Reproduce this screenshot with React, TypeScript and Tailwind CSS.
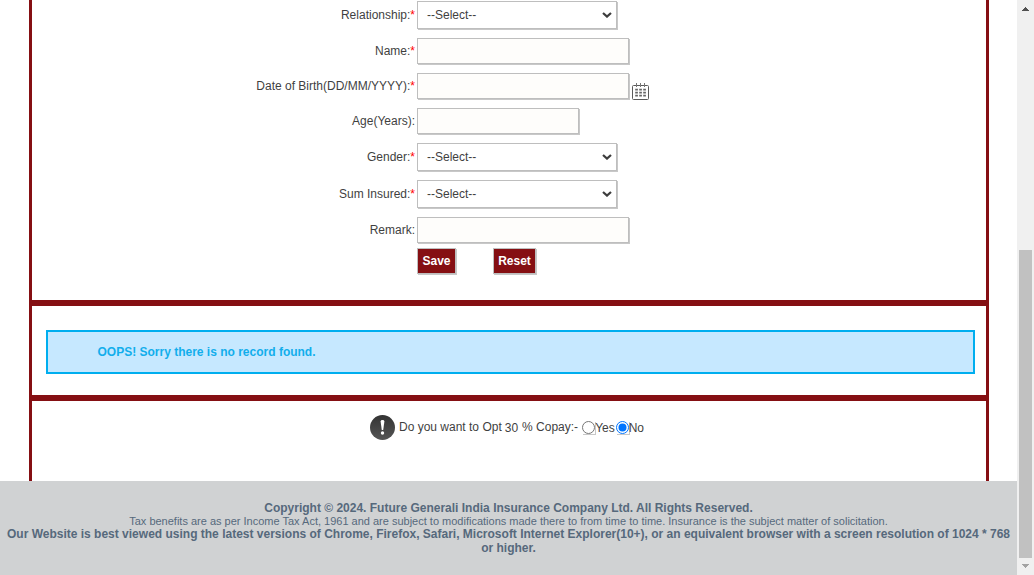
import type { ReactNode } from "react";

const fieldBase = "box-border border border-[#bebebe] shadow-[1px_1px_0_#c8c8c8]";

function Row({ label, required, children }: { label: string; required?: boolean; children: ReactNode }) {
  return (
    <div className="flex items-center">
      <div className="w-[383px] text-right leading-[14px] whitespace-nowrap">
        {label}
        {required && <span className="text-[#ff0000]">*</span>}
      </div>
      <div className="ml-[2px] flex">{children}</div>
    </div>
  );
}

function SelectBox() {
  return (
    <div className={`${fieldBase} flex h-[28px] w-[200px] items-center justify-between bg-white pr-[4px] pl-[9px]`}>
      <span className="leading-[14px]">--Select--</span>
      <svg width="10" height="6" viewBox="0 0 10 6" fill="none">
        <path d="M1 1 L5 4.6 L9 1" stroke="#3c3c3c" strokeWidth="2.2" />
      </svg>
    </div>
  );
}

function TextBox({ short }: { short?: boolean }) {
  return <div className={`${fieldBase} h-[26px] bg-[#fefdfb] ${short ? "w-[162px]" : "w-[212px]"}`} />;
}

function CalendarIcon() {
  return (
    <svg className="mt-[10px] ml-[3px]" width="17" height="17" viewBox="0 0 17 17" fill="none">
      <rect x="0.5" y="2.5" width="16" height="14" rx="1" stroke="#5a5a5a" />
      <path d="M4.5 0V4M8.5 0V4M12.5 0V4" stroke="#777" />
      <path d="M3.2 6.7H14M3.2 9.7H14M3.2 12.7H14" stroke="#666" strokeWidth="1.7" strokeDasharray="2.7 1.3" />
    </svg>
  );
}

function Radio({ on }: { on?: boolean }) {
  return (
    <span className="flex size-[13px] shadow-[1px_1px_0_#c8c8c8]">
      <svg width="13" height="13" viewBox="0 0 13 13">
        <circle cx="6.5" cy="6.5" r="6" fill="#fff" stroke={on ? "#0075ff" : "#767676"} />
        {on && <circle cx="6.5" cy="6.5" r="4" fill="#0075ff" />}
      </svg>
    </span>
  );
}

function AlertIcon() {
  return (
    <svg width="25" height="25" viewBox="0 0 25 25">
      <defs>
        <linearGradient id="disc" x1="0" y1="0" x2="0" y2="1">
          <stop offset="0" stopColor="#333" />
          <stop offset="1" stopColor="#555" />
        </linearGradient>
      </defs>
      <circle cx="12.5" cy="12.5" r="12.5" fill="url(#disc)" />
      <path d="M10.6 6.4Q10.6 5 12.5 5Q14.4 5 14.4 6.4L13.2 15H11.8Z" fill="#fff" />
      <circle cx="12.5" cy="18" r="1.7" fill="#fff" />
    </svg>
  );
}

export default function App() {
  return (
    <div className="flex h-[575px] w-[1034px] overflow-hidden bg-white font-['Liberation_Sans',Arial,sans-serif] text-[12px] text-[#3f3f3f]">
      <div className="flex w-[1017px] flex-col">
        <main className="ml-[29px] flex h-[481px] w-[960px] flex-col border-x-[3px] border-[#850f13]">
          <section className="flex h-[300px] flex-col gap-[9px] pt-px">
            <Row label="Relationship:" required><SelectBox /></Row>
            <Row label="Name:" required><TextBox /></Row>
            <Row label="Date of Birth(DD/MM/YYYY):" required>
              <div className="flex h-[26px]">
                <TextBox />
                <CalendarIcon />
              </div>
            </Row>
            <Row label="Age(Years):"><TextBox short /></Row>
            <Row label="Gender:" required><SelectBox /></Row>
            <Row label="Sum Insured:" required><SelectBox /></Row>
            <Row label="Remark:"><TextBox /></Row>
            <div className="-mt-1 ml-[385px] flex gap-[37px] font-bold text-white">
              <button className={`${fieldBase} flex h-[26px] w-[39px] justify-center bg-[#850f13] pt-[5px] leading-[14px]`}>Save</button>
              <button className={`${fieldBase} flex h-[26px] w-[43px] justify-center bg-[#850f13] pt-[5px] leading-[14px]`}>Reset</button>
            </div>
          </section>
          <section className="h-[101px] border-y-[6px] border-[#850f13] pt-6 pr-[11px] pl-[14px]">
            <div className="flex h-[44px] items-center border-2 border-[#00aeef] bg-[#c6e8ff] pl-[49.5px] font-bold text-[#12aeec]">
              OOPS! Sorry there is no record found.
            </div>
          </section>
          <section className="flex h-[80px] items-start pt-[14px] pl-[338px]">
            <AlertIcon />
            <span className="ml-1 pt-[5px] leading-[14px] whitespace-nowrap">Do you want to Opt</span>
            <span className="ml-[3px] pt-[6px] leading-[14px]">30</span>
            <span className="ml-[4px] pt-[5px] leading-[14px] whitespace-nowrap">% Copay:-</span>
            <span className="ml-[4px] flex pt-[6px] leading-[14px]">
              <Radio />Yes
              <span className="ml-[1px] flex"><Radio on />No</span>
            </span>
          </section>
        </main>
        <footer className="h-[94px] bg-[#d0d2d3] pt-5 text-center font-bold text-[#56697c]">
          <p className="leading-[14px]">Copyright © 2024. Future Generali India Insurance Company Ltd. All Rights Reserved.</p>
          <p className="text-[11px] leading-[12px] font-normal">Tax benefits are as per Income Tax Act, 1961 and are subject to modifications made there to from time to time. Insurance is the subject matter of solicitation.</p>
          <p className="leading-[14px] whitespace-nowrap">Our Website is best viewed using the latest versions of Chrome, Firefox, Safari, Microsoft Internet Explorer(10+), or an equivalent browser with a screen resolution of 1024 * 768<br />or higher.</p>
        </footer>
      </div>
      <aside className="flex w-[17px] flex-col items-center bg-[#f0f0f0]">
        <svg className="mt-[7px]" width="7" height="4" viewBox="0 0 7 4" shapeRendering="crispEdges"><path d="M3 0H4V1H5V2H6V3H7V4H0V3H1V2H2V1H3Z" fill="#505050" /></svg>
        <div className="mt-[239px] h-[308px] w-[13px] bg-[#c1c1c1]" />
        <svg className="mt-[6px]" width="7" height="4" viewBox="0 0 7 4" shapeRendering="crispEdges"><path d="M0 0H7V1H6V2H5V3H4V4H3V3H2V2H1V1H0Z" fill="#a3a3a3" /></svg>
      </aside>
    </div>
  );
}
